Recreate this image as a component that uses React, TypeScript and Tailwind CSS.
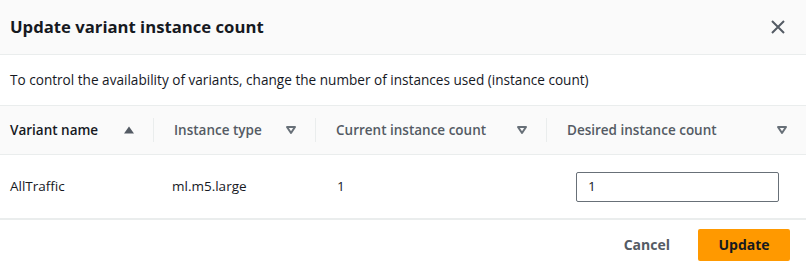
import React from "react";

function SortUp() {
  return (
    <svg width="12" height="10" viewBox="0 0 12 10">
      <polygon points="6,1.5 11,8.5 1,8.5" fill="#545b64" />
    </svg>
  );
}

function SortDown() {
  return (
    <svg width="12" height="10" viewBox="0 0 12 10">
      <polygon points="2,2 10,2 6,8" fill="none" stroke="#687078" strokeWidth="2" strokeLinejoin="round" />
    </svg>
  );
}

function HeaderCell({ label, width, active, first }: { label: string; width: number; active?: boolean; first?: boolean }) {
  return (
    <div className="relative flex items-center h-full" style={{ width }}>
      {!first && <div className="absolute left-0 top-[12px] h-[24px] w-px bg-[#eaeded]" />}
      <div className={`flex items-center justify-between w-full ${first ? "pl-[10px]" : "pl-[21px]"} pr-[18px]`}>
        <span className={`text-[13.5px] font-semibold ${active ? "text-[#16191f]" : "text-[#545b64]"}`}>{label}</span>
        {active ? <SortUp /> : <SortDown />}
      </div>
    </div>
  );
}

export default function App() {
  return (
    <div className="w-[806px] h-[269px] bg-white font-['Open_Sans',sans-serif] text-[#16191f] flex flex-col">
      <div className="h-[55px] shrink-0 bg-[#fafafa] border-b border-[#eaeded] flex items-center justify-between pl-[10px] pr-[20px]">
        <h1 className="text-[16.7px] font-bold text-[#16191f]">Update variant instance count</h1>
        <svg width="16" height="16" viewBox="0 0 16 16">
          <path d="M2 2 L14 14 M14 2 L2 14" stroke="#545b64" strokeWidth="2" fill="none" />
        </svg>
      </div>
      <div className="h-[51px] shrink-0 border-b border-[#eaeded] flex items-center pl-[10px] text-[13.6px] text-[#16191f]">
        To control the availability of variants, change the number of instances used (instance count)
      </div>
      <div className="h-[49px] shrink-0 bg-[#fafafa] border-b border-[#eaeded] flex">
        <HeaderCell label="Variant name" width={153} active first />
        <HeaderCell label="Instance type" width={162} />
        <HeaderCell label="Current instance count" width={231} />
        <HeaderCell label="Desired instance count" width={260} />
      </div>
      <div className="h-[65px] shrink-0 border-b-2 border-[#eaeded] flex items-center text-[13.5px] text-[#16191f]">
        <div className="w-[153px] pl-[10px]">AllTraffic</div>
        <div className="w-[162px] pl-[19px]">ml.m5.large</div>
        <div className="w-[231px] pl-[22px]">1</div>
        <div className="w-[260px] pl-[30px]">
          <div className="w-[203px] h-[30px] border border-[#687078] rounded-[2px] flex items-center pl-[11px] text-[13.5px]">1</div>
        </div>
      </div>
      <div className="flex-1 flex items-center justify-end pr-[16px] gap-[8px]">
        <button className="h-[32px] px-[20px] text-[14px] font-bold text-[#545b64]">Cancel</button>
        <button className="h-[32px] w-[92px] rounded-[2px] bg-[#ff9900] text-[14px] font-bold text-[#16191f]">Update</button>
      </div>
    </div>
  );
}
